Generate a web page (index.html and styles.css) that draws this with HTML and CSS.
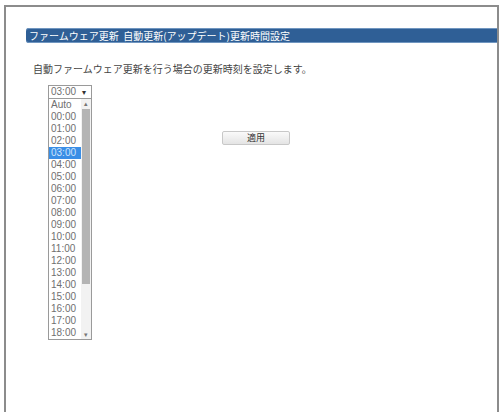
FILE: index.html
```html
<!DOCTYPE html>
<html lang="ja">
<head>
    <meta charset="UTF-8">
    <title>自動更新時間設定</title>
    <link rel="stylesheet" href="styles.css">
</head>
<body>
    <div class="frame">
        <div class="title-bar">ファームウェア更新&nbsp;&nbsp;自動更新(アップデート)更新時間設定</div>
        <p class="desc">自動ファームウェア更新を行う場合の更新時刻を設定します。</p>

        <div class="controls">
            <div class="picker">
                <div class="picker-box">03:00 <span class="caret">&#9662;</span></div>
                <div class="listbox">
                    <ul class="options">
                        <li>Auto</li>
                        <li>00:00</li>
                        <li>01:00</li>
                        <li>02:00</li>
                        <li class="selected">03:00</li>
                        <li>04:00</li>
                        <li>05:00</li>
                        <li>06:00</li>
                        <li>07:00</li>
                        <li>08:00</li>
                        <li>09:00</li>
                        <li>10:00</li>
                        <li>11:00</li>
                        <li>12:00</li>
                        <li>13:00</li>
                        <li>14:00</li>
                        <li>15:00</li>
                        <li>16:00</li>
                        <li>17:00</li>
                        <li>18:00</li>
                    </ul>
                    <div class="scrollbar">
                        <span class="arrow">&#9652;</span>
                        <div class="track"><div class="thumb"></div></div>
                        <span class="arrow">&#9662;</span>
                    </div>
                </div>
            </div>

            <button type="button" class="apply">適用</button>
        </div>
    </div>
</body>
</html>
```

FILE: styles.css
```css
body {
    margin: 0;
    background: #fff;
    font-family: "Noto Sans CJK JP", "Liberation Sans", sans-serif;
    color: #444;
}

.frame {
    margin: 5px 2px 0 4px;
    height: 407px;
    border: 2px solid #8c8c8c;
    border-bottom: none;
    padding: 21px 0 0 20px;
    box-sizing: border-box;
}

.title-bar {
    height: 15px;
    line-height: 15px;
    background: #2f5f96;
    box-shadow: inset 0 1px 0 #7096c0, inset 0 -1px 0 #7096c0;
    border-radius: 3px 0 0 3px;
    color: #fff;
    font-size: 10px;
    padding-left: 3px;
    white-space: nowrap;
}

.desc {
    margin: 19px 0 0 7px;
    font-size: 10px;
    line-height: 14px;
    color: #444;
}

.controls {
    display: flex;
    align-items: flex-start;
    margin: 9px 0 0 22px;
}

.picker {
    width: 44px;
    font-family: "Liberation Sans", sans-serif;
    font-size: 10px;
    color: #707070;
}

.picker-box {
    height: 12px;
    line-height: 12px;
    border: 1px solid #9a9a9a;
    padding-left: 2px;
}

.caret {
    font-size: 8px;
    margin-left: 3px;
    color: #333;
}

.listbox {
    display: flex;
    border: 1px solid #9a9a9a;
    border-top: none;
    height: 240px;
    overflow: hidden;
}

.options {
    list-style: none;
    margin: 0;
    padding: 0;
    flex: 1;
}

.options li {
    height: 12px;
    line-height: 12px;
    padding-left: 2px;
}

.options li.selected {
    background: #3a8ee6;
    color: #cfe4fb;
}

.scrollbar {
    width: 10px;
    display: flex;
    flex-direction: column;
    align-items: center;
    background: #f2f2f2;
}

.arrow {
    font-size: 7px;
    line-height: 9px;
    color: #777;
}

.track {
    flex: 1;
    width: 100%;
}

.thumb {
    margin: 1px 1px 0;
    height: 175px;
    background: #b4b4b4;
}

.apply {
    margin: 46px 0 0 130px;
    width: 68px;
    height: 14px;
    padding: 0;
    font-family: "Noto Sans CJK JP", sans-serif;
    font-size: 9px;
    line-height: 12px;
    color: #333;
    border: 1px solid #c8c8c8;
    border-radius: 2px;
    background: linear-gradient(#fafafa, #e4e4e4);
}
```
